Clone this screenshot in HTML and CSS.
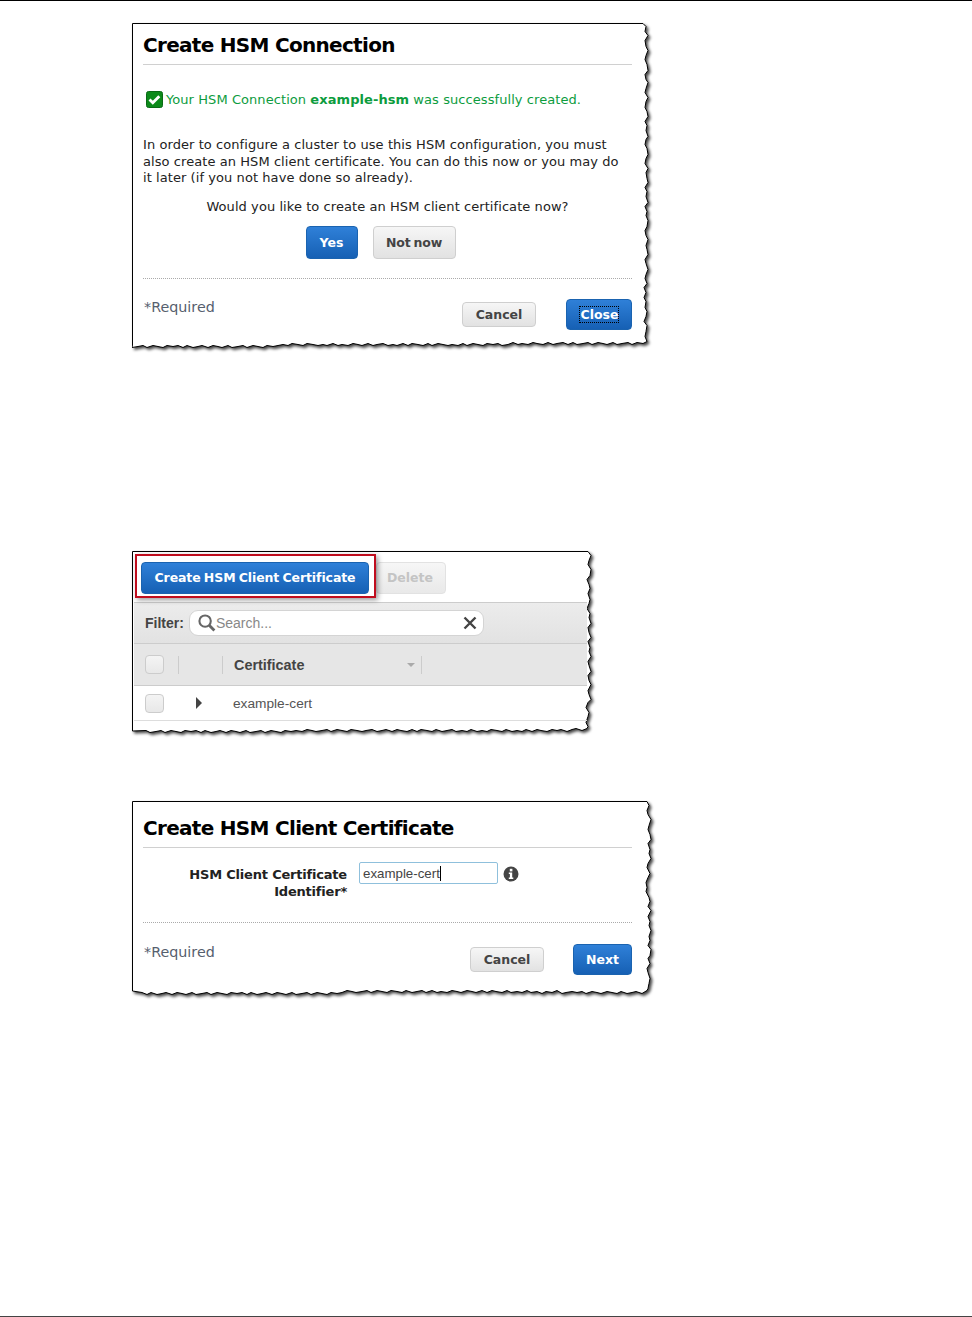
FILE: index.html
```html
<!DOCTYPE html>
<html lang="en">
<head>
  <meta charset="UTF-8">
  <title>Create HSM Connection</title>
  <link rel="stylesheet" href="styles.css">
</head>
<body>
  <div class="page">

    <!-- Connection created -->
    <div class="shot shot-connection">
      <svg class="torn" width="530" height="335">
        <path d="M0.5 0.5H511 l3 3 l-1 5 l3 4 l-3 5 l1 6 l2 4 l-2 5 l-1 4 l2 5 l1 6 l-3 4 l1 5 l2 3 l-2 6 l-1 4 l3 5 l-2 4 l-1 6 l2 4 l1 5 l-3 5 l2 4 l-1 5 l2 6 l-2 3 l-1 5 l2 4 l1 6 l-2 4 l-1 5 l3 5 l-2 4 l1 6 l1 4 l-3 5 l2 4 l-1 5 l2 6 l-3 4 l2 5 l-1 4 l2 5 l-1 6 l-2 4 l1 5 l2 4 l-2 6 l1 4 l1 5 l-3 5 l1 4 l2 6 l-2 5 l-1 4 l2 5 l-3 4 l2 5 l-2 5 l2 4 l-1 6 l2 4 l-1 5 l-2 5 l3 4 l-1 6 l-1 5 l2 5 l-4 2 l-6 -1 l-5 2 l-4 -2 l-6 1 l-5 1 l-4 -2 l-6 2 l-4 -1 l-5 -1 l-6 2 l-4 -2 l-5 1 l-6 1 l-4 -2 l-5 2 l-5 -2 l-6 1 l-4 1 l-5 -2 l-5 2 l-6 -1 l-4 -1 l-5 2 l-6 -1 l-4 1 l-5 -2 l-5 2 l-6 1 l-4 -2 l-5 1 l-6 -1 l-4 2 l-5 -1 l-5 -1 l-6 2 l-4 -2 l-5 2 l-6 -1 l-4 1 l-5 -1 l-5 -1 l-6 2 l-4 -2 l-5 2 l-5 -1 l-6 -1 l-4 2 l-5 -2 l-6 2 l-4 -1 l-5 1 l-5 -2 l-6 1 l-4 1 l-5 -2 l-6 2 l-4 -1 l-5 -1 l-5 2 l-6 -1 l-4 1 l-5 -2 l-6 2 l-4 -1 l-5 1 l-5 -1 l-6 -1 l-4 2 l-5 -1 l-6 -1 l-4 2 l-5 -1 l-5 1 l-5 1 l-6 -1 l-4 2 l-5 -1 l-5 -1 l-6 2 l-4 -2 l-5 1 l-6 1 l-4 -2 l-6 2 l-4 -1 l-5 -1 l-5 2 l-6 -2 l-4 1 l-5 1 l-6 -2 l-4 2 l-5 -2 l-5 1 l-6 -1 l-4 2 l-5 -1 l-5 -1 l-6 2 l-4 -2 l-5 1 l-6 1 L0.5 322Z"/>
      </svg>
      <div class="card card-connection">
        <h1 class="title">Create HSM Connection</h1>
        <p class="success">
          <svg class="check" width="17" height="17" viewBox="0 0 17 17">
            <rect x="0.5" y="0.5" width="16" height="16" rx="2" fill="#0c8a1a" stroke="#0a6a16"/>
            <path d="M3.5 8.5l3.3 3.3 6.5-6.5" fill="none" stroke="#fff" stroke-width="2.8"/>
          </svg>
          <span>Your HSM Connection <b>example-hsm</b> was successfully created.</span>
        </p>
        <p class="body-text">In order to configure a cluster to use this HSM configuration, you must also create an HSM client certificate. You can do this now or you may do it later (if you not have done so already).</p>
        <p class="question">Would you like to create an HSM client certificate now?</p>
        <div class="choice">
          <button class="btn btn-primary btn-yes">Yes</button>
          <button class="btn btn-plain btn-notnow">Not now</button>
        </div>
        <div class="footer">
          <span class="required">*Required</span>
          <div class="footer-buttons">
            <button class="btn btn-plain btn-cancel">Cancel</button>
            <button class="btn btn-primary btn-close"><span class="focus-ring">Close</span></button>
          </div>
        </div>
      </div>
    </div>

    <!-- Certificate list -->
    <div class="shot shot-list">
      <svg class="torn" width="470" height="195">
        <path d="M0.5 0.5H456 l3 4 l-2 5 l-1 4 l3 5 l-1 6 l-3 4 l2 5 l1 4 l-2 5 l2 6 l-1 4 l-2 5 l3 5 l-1 4 l2 6 l-3 4 l1 5 l2 5 l-3 4 l2 6 l-1 4 l2 5 l-3 5 l1 4 l2 6 l-3 4 l1 5 l2 4 l-3 6 l1 4 l2 5 l-3 3 l-2 5 l3 5 l-1 4 l-2 6 l2 4 l-1 2 l-5 2 l-6 -2 l-4 1 l-5 2 l-6 -2 l-4 1 l-5 -1 l-5 2 l-6 -1 l-4 -1 l-5 2 l-6 -2 l-4 2 l-5 -1 l-5 1 l-6 -2 l-4 2 l-5 -1 l-6 -1 l-4 2 l-5 -1 l-5 1 l-6 -2 l-4 2 l-5 -1 l-6 1 l-4 -2 l-5 1 l-5 1 l-6 -2 l-4 2 l-5 -1 l-6 -1 l-4 2 l-5 -2 l-5 2 l-6 -1 l-4 -1 l-5 2 l-6 -2 l-4 1 l-5 1 l-5 -2 l-6 1 l-4 1 l-5 -1 l-6 -1 l-4 2 l-5 -1 l-5 -1 l-6 2 l-4 -2 l-5 1 l-6 1 l-4 -1 l-5 -1 l-5 2 l-6 -1 l-5 1 l-6 -1 l-4 2 l-5 -1 l-5 -1 l-6 2 l-4 -2 l-5 1 l-6 1 l-4 -2 l-6 2 l-4 -1 l-5 -1 l-5 2 l-6 -2 l-4 1 l-5 1 l-6 -2 l-4 2 l-5 -2 l-5 1 l-6 -1 l-4 2 l-5 -1 l-5 -1 l-6 2 l-4 -2 l-5 1 l-6 1 l-4 -2 L0.5 180Z"/>
      </svg>
      <div class="card card-list">
        <div class="toolbar">
          <button class="btn btn-primary btn-create">Create HSM Client Certificate</button>
          <button class="btn btn-disabled">Delete</button>
          <div class="highlight"></div>
        </div>
        <div class="filter-bar">
          <b class="filter-label">Filter:</b>
          <div class="search">
            <svg width="18" height="18" viewBox="0 0 19 19">
              <circle cx="7.5" cy="7.5" r="6" fill="none" stroke="#666" stroke-width="2.2"/>
              <path d="M11.8 11.8l5.5 5.5" stroke="#666" stroke-width="3"/>
            </svg>
            <span class="search-text">Search...</span>
            <svg class="search-clear" width="14" height="14" viewBox="0 0 14 14">
              <path d="M1.5 1.5l11 11M12.5 1.5l-11 11" stroke="#444" stroke-width="2.4"/>
            </svg>
          </div>
        </div>
        <div class="table-head">
          <span class="checkbox"></span>
          <span class="col-sep col-sep-first"></span>
          <span class="col-sep"></span>
          <b class="col-title">Certificate</b>
          <span class="sort-arrow"></span>
          <span class="col-sep"></span>
        </div>
        <div class="table-row">
          <span class="checkbox"></span>
          <span class="expand-arrow"></span>
          <span class="cell">example-cert</span>
        </div>
      </div>
    </div>

    <!-- Client certificate form -->
    <div class="shot shot-form">
      <svg class="torn" width="530" height="205">
        <path d="M0.5 0.5H515 l2 4 l-2 5 l1 4 l3 5 l-2 6 l-1 4 l2 5 l1 5 l-3 4 l2 6 l-1 4 l2 5 l-3 5 l-1 4 l3 6 l-2 4 l-2 5 l1 5 l-1 4 l3 6 l1 4 l-2 5 l3 4 l-3 6 l2 5 l-1 4 l2 5 l-2 6 l1 4 l-2 5 l3 4 l-1 6 l-2 3 l2 5 l-3 5 l1 4 l2 6 l-1 5 l-1 5 l-1 2 l-5 3 l-6 -2 l-4 1 l-5 1 l-6 -2 l-4 2 l-5 -1 l-5 -1 l-6 2 l-4 -1 l-5 -1 l-6 2 l-4 -2 l-5 1 l-5 -1 l-6 1 l-4 1 l-5 -3 l-5 2 l-6 -1 l-4 2 l-5 -2 l-6 1 l-4 -2 l-5 2 l-5 -1 l-6 1 l-4 -2 l-5 2 l-6 -1 l-4 -1 l-5 2 l-5 -2 l-6 2 l-4 -1 l-5 -1 l-6 2 l-4 -1 l-5 -1 l-5 2 l-6 -1 l-4 1 l-5 -2 l-6 2 l-4 -2 l-5 1 l-5 1 l-6 -2 l-4 2 l-5 -1 l-6 -1 l-4 2 l-5 -1 l-5 -1 l-6 2 l-4 -2 l-5 1 l-6 1 l-4 -1 l-5 -1 l-5 2 l-5 1 l-6 -1 l-4 2 l-5 -1 l-5 -1 l-6 2 l-4 -2 l-5 1 l-6 1 l-4 -2 l-6 2 l-4 -1 l-5 -1 l-5 2 l-6 -2 l-4 1 l-5 1 l-6 -2 l-4 2 l-5 -2 l-5 1 l-6 -1 l-4 2 l-5 -1 l-5 -1 l-6 2 l-4 -2 l-5 1 l-6 1 l-4 -2 l-6 2 l-4 -1 l-5 -1 l-5 2 l-6 -2 l-4 1 l-5 1 l-6 -2 l-4 2 l-5 -2 L0.5 190Z"/>
      </svg>
      <div class="card card-form">
        <h1 class="title">Create HSM Client Certificate</h1>
        <div class="field">
          <label class="field-label">HSM Client Certificate Identifier*</label>
          <div class="input">example-cert<span class="caret"></span></div>
          <svg class="info" width="16" height="16" viewBox="0 0 16 16">
            <circle cx="8" cy="8" r="7.5" fill="#444"/>
            <rect x="6.8" y="2.8" width="2.6" height="2.6" fill="#fff"/>
            <path d="M5.8 6.6h3.4v5h1.1v1.4H5.8v-1.4h1.1V8H5.8z" fill="#fff"/>
          </svg>
        </div>
        <div class="footer footer-form">
          <span class="required">*Required</span>
          <div class="footer-buttons">
            <button class="btn btn-plain btn-cancel">Cancel</button>
            <button class="btn btn-primary btn-next">Next</button>
          </div>
        </div>
      </div>
    </div>

  </div>
</body>
</html>
```

FILE: styles.css
```css
* {
  box-sizing: border-box;
}
body {
  margin: 0;
  background: #fff;
  font-family: "DejaVu Sans", Verdana, sans-serif;
  color: #222;
}
.page {
  height: 1317px;
  border-top: 1px solid #000;
  border-bottom: 1px solid #444;
  padding: 22px 0 0 132px;
}

/* screenshots with a torn edge */
.shot {
  position: relative;
}
.shot-connection {
  height: 325px;
}
.shot-list {
  height: 180px;
  margin-top: 203px;
}
.shot-form {
  height: 192px;
  margin-top: 70px;
}
.torn {
  position: absolute;
  left: 0;
  top: 0;
  filter: drop-shadow(2px 2px 1.5px #444);
}
.torn path {
  fill: #fff;
  stroke: #000;
  stroke-width: 1;
}
.card {
  position: relative;
}
.card-connection {
  width: 500px;
  padding: 9px 0 0 11px;
}
.card-form {
  width: 500px;
  padding: 14px 0 0 11px;
}

.title {
  margin: 0;
  padding-bottom: 6px;
  border-bottom: 1px solid #d0d0d0;
  font-size: 20px;
  letter-spacing: -0.7px;
  line-height: 26px;
  font-weight: bold;
  color: #000;
}

.success {
  display: flex;
  align-items: center;
  gap: 3px;
  margin: 26px 0 0 3px;
  font-size: 13px;
  letter-spacing: 0.07px;
  line-height: 17px;
  color: #0d9c3e;
}
.check {
  flex: none;
}
.body-text {
  max-width: 482px;
  margin: 29px 0 0;
  font-size: 13px;
  letter-spacing: 0.07px;
  line-height: 16.5px;
  color: #222;
}
.question {
  margin: 11px 0 0;
  text-align: center;
  font-size: 13px;
  letter-spacing: 0.07px;
  line-height: 17px;
}

/* buttons */
.btn {
  border-radius: 4px;
  font-family: "DejaVu Sans", Verdana, sans-serif;
  font-size: 12.5px;
  font-weight: bold;
  word-spacing: -1px;
  padding: 0;
  height: 32px;
}
.btn-primary {
  border: 1px solid #1a63b0;
  background: linear-gradient(to bottom, #2f80d8, #1660b4);
  color: #fff;
}
.btn-plain {
  border: 1px solid #cfcfcf;
  background: linear-gradient(to bottom, #f6f6f6, #e2e2e2);
  color: #444;
}
.btn-disabled {
  width: 70px;
  padding-right: 2px;
  border: 1px solid #e2e2e2;
  background: linear-gradient(to bottom, #f6f6f6, #e9e9e9);
  color: #c4c4c4;
}
.choice {
  display: flex;
  justify-content: center;
  gap: 15px;
  margin-top: 11px;
  padding-right: 14px;
}
.btn-yes {
  width: 52px;
  height: 33px;
}
.btn-notnow {
  width: 83px;
  height: 33px;
  word-spacing: -1px;
  letter-spacing: -0.2px;
}
.btn-cancel {
  width: 74px;
  height: 25px;
}
.btn-close {
  width: 66px;
  height: 31px;
}
.btn-next {
  width: 59px;
  height: 31px;
}
.focus-ring {
  border: 1px dotted #000;
  padding: 0 0 0 1px;
}
.footer {
  display: flex;
  justify-content: space-between;
  margin-top: 19px;
  padding-top: 20px;
  border-top: 1px dotted #aaa;
}
.footer-form {
  margin-top: 22px;
  padding-top: 21px;
}
.footer-buttons {
  display: flex;
  align-items: center;
  gap: 30px;
}
.footer-form .footer-buttons {
  gap: 29px;
}
.required {
  margin-left: 1px;
  font-size: 14.3px;
  line-height: 16px;
  color: #56606e;
}

/* certificate list */
.card-list {
  width: 455px;
  padding: 2px 0 0 2px;
}
.toolbar {
  position: relative;
  display: flex;
  align-items: center;
  gap: 7px;
  height: 50px;
  padding-left: 7px;
  border-bottom: 1px solid #ccc;
}
.btn-create {
  width: 228px;
  height: 32px;
  letter-spacing: -0.1px;
}
.highlight {
  position: absolute;
  left: 1px;
  top: 1px;
  width: 241px;
  height: 44px;
  border: 2px solid #c00d1e;
  box-shadow: 2px 2px 5px rgba(0, 0, 0, 0.4);
}
.filter-bar {
  display: flex;
  align-items: center;
  gap: 5px;
  height: 41px;
  padding-left: 11px;
  border-bottom: 1px solid #ccc;
  background: linear-gradient(to bottom, #ececec, #e2e2e2);
}
.filter-label {
  font-family: "Liberation Sans", Arial, sans-serif;
  font-size: 14px;
  color: #444;
}
.search {
  display: flex;
  align-items: center;
  width: 295px;
  height: 26px;
  padding: 0 6px 0 8px;
  border: 1px solid #d4d4d4;
  border-radius: 9px;
  background: #fff;
}
.search-text {
  font-family: "Liberation Sans", Arial, sans-serif;
  font-size: 14px;
  color: #888;
}
.search-clear {
  margin-left: auto;
}
.table-head {
  display: flex;
  align-items: center;
  height: 42px;
  padding-left: 11px;
  border-bottom: 1px solid #ccc;
  background: #e6e6e6;
}
.checkbox {
  flex: none;
  width: 19px;
  height: 19px;
  border: 1px solid #ccc;
  border-radius: 4px;
  background: linear-gradient(to bottom, #f4f4f4, #e8e8e8);
}
.col-sep {
  flex: none;
  width: 1px;
  height: 18px;
  margin-left: 43px;
  background: #fafafa;
  border-left: 1px solid #ccc;
}
.col-sep-first {
  margin-left: 14px;
}
.col-sep:last-child {
  margin-left: 6px;
}
.col-title {
  margin-left: 11px;
  width: 173px;
  font-family: "Liberation Sans", Arial, sans-serif;
  font-size: 14.4px;
  color: #444;
}
.sort-arrow {
  width: 0;
  height: 0;
  border-left: 4px solid transparent;
  border-right: 4px solid transparent;
  border-top: 4px solid #aaa;
}
.table-row {
  display: flex;
  align-items: center;
  height: 35px;
  padding-left: 11px;
  border-bottom: 1px solid #ddd;
}
.expand-arrow {
  width: 0;
  height: 0;
  margin-left: 32px;
  border-top: 6px solid transparent;
  border-bottom: 6px solid transparent;
  border-left: 6px solid #444;
}
.cell {
  margin-left: 31px;
  font-family: "Liberation Sans", Arial, sans-serif;
  font-size: 13.7px;
  color: #555;
}

/* certificate form */
.field {
  display: flex;
  align-items: flex-start;
  margin-top: 14px;
}
.field-label {
  width: 204px;
  padding-top: 4px;
  text-align: right;
  font-size: 13px;
  font-weight: bold;
  letter-spacing: -0.2px;
  line-height: 17px;
  color: #222;
}
.input {
  width: 139px;
  height: 22px;
  margin-left: 12px;
  padding-left: 3px;
  border: 1px solid #8fc0dc;
  border-radius: 2px;
  font-family: "Liberation Sans", Arial, sans-serif;
  font-size: 13.3px;
  line-height: 21px;
  color: #444;
}
.caret {
  display: inline-block;
  width: 1px;
  height: 15px;
  vertical-align: -3px;
  background: #000;
}
.info {
  margin: 4px 0 0 5px;
}
```
